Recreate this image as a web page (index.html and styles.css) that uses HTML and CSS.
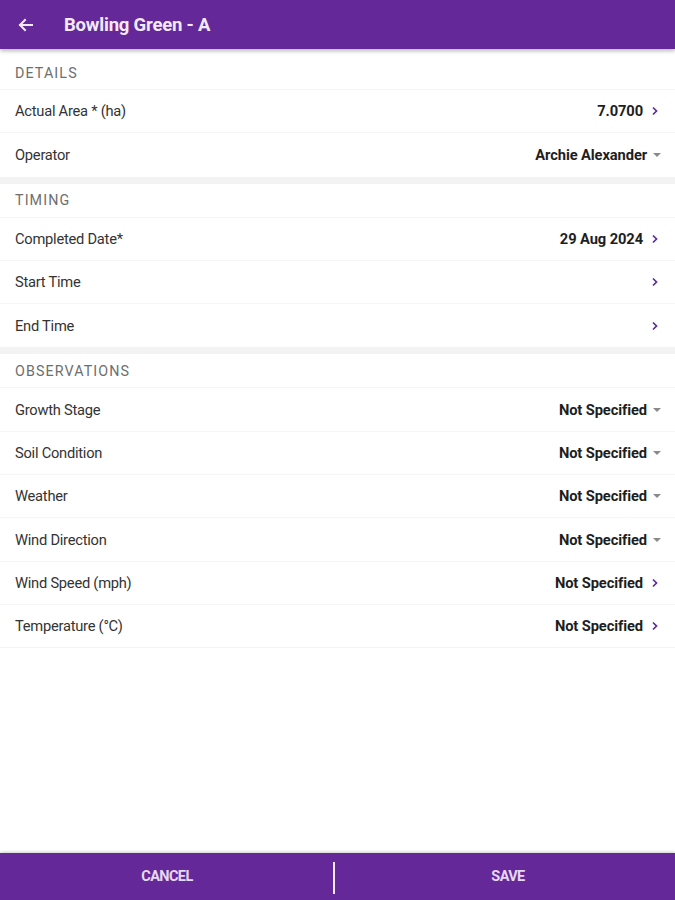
FILE: index.html
```html
<!DOCTYPE html>
<html lang="en">
<head>
<meta charset="utf-8">
<title>Bowling Green - A</title>
<link rel="stylesheet" href="styles.css">
</head>
<body>
<div class="app">
  <header class="toolbar">
    <span class="back" aria-label="Back">
      <svg width="16" height="16" viewBox="0 0 16 16"><path d="M15 8H3M8 3L3 8l5 5" fill="none" stroke="currentColor" stroke-width="2" stroke-linecap="square"/></svg>
    </span>
    <h1 class="title">Bowling Green - A</h1>
  </header>

  <main class="content">
    <section class="section first">
      <div class="sec-head">DETAILS</div>
      <div class="row"><span class="label">Actual Area * (ha)</span><span class="value">7.0700</span><span class="chev"><svg width="8" height="10" viewBox="0 0 8 10"><path d="M2 1.5L5.5 5 2 8.5" fill="none" stroke="currentColor" stroke-width="1.7"/></svg></span></div>
      <div class="row"><span class="label">Operator</span><span class="value">Archie Alexander</span><span class="drop"></span></div>
    </section>

    <section class="section">
      <div class="sec-head">TIMING</div>
      <div class="row"><span class="label">Completed Date*</span><span class="value">29 Aug 2024</span><span class="chev"><svg width="8" height="10" viewBox="0 0 8 10"><path d="M2 1.5L5.5 5 2 8.5" fill="none" stroke="currentColor" stroke-width="1.7"/></svg></span></div>
      <div class="row"><span class="label">Start Time</span><span class="value"></span><span class="chev"><svg width="8" height="10" viewBox="0 0 8 10"><path d="M2 1.5L5.5 5 2 8.5" fill="none" stroke="currentColor" stroke-width="1.7"/></svg></span></div>
      <div class="row"><span class="label">End Time</span><span class="value"></span><span class="chev"><svg width="8" height="10" viewBox="0 0 8 10"><path d="M2 1.5L5.5 5 2 8.5" fill="none" stroke="currentColor" stroke-width="1.7"/></svg></span></div>
    </section>

    <section class="section">
      <div class="sec-head">OBSERVATIONS</div>
      <div class="row"><span class="label">Growth Stage</span><span class="value">Not Specified</span><span class="drop"></span></div>
      <div class="row"><span class="label">Soil Condition</span><span class="value">Not Specified</span><span class="drop"></span></div>
      <div class="row"><span class="label">Weather</span><span class="value">Not Specified</span><span class="drop"></span></div>
      <div class="row"><span class="label">Wind Direction</span><span class="value">Not Specified</span><span class="drop"></span></div>
      <div class="row"><span class="label">Wind Speed (mph)</span><span class="value">Not Specified</span><span class="chev"><svg width="8" height="10" viewBox="0 0 8 10"><path d="M2 1.5L5.5 5 2 8.5" fill="none" stroke="currentColor" stroke-width="1.7"/></svg></span></div>
      <div class="row"><span class="label">Temperature (°C)</span><span class="value">Not Specified</span><span class="chev"><svg width="8" height="10" viewBox="0 0 8 10"><path d="M2 1.5L5.5 5 2 8.5" fill="none" stroke="currentColor" stroke-width="1.7"/></svg></span></div>
    </section>
  </main>

  <footer class="footer">
    <button class="btn">CANCEL</button>
    <span class="sep"></span>
    <button class="btn save">SAVE</button>
  </footer>
</div>
</body>
</html>
```

FILE: styles.css
```css
* { box-sizing: border-box; }
html, body { margin: 0; padding: 0; height: 100%; }
body {
  font-family: Roboto, "Liberation Sans", Arial, sans-serif;
  background: #ffffff;
  color: #2b2b2b;
}
.app {
  display: flex;
  flex-direction: column;
  height: 900px;
}
.toolbar {
  height: 49px;
  background: #652899;
  color: #f3eaf9;
  display: flex;
  align-items: center;
  padding-left: 17px;
  box-shadow: 0 2px 4px rgba(0,0,0,0.28);
  position: relative;
  z-index: 2;
  flex: none;
}
.back { display: flex; width: 16px; height: 16px; color: #f3eaf9; }
.title {
  margin: 0 0 0 31px;
  font-size: 18.5px;
  font-weight: 700;
  letter-spacing: -0.2px;
}
.content {
  flex: 1;
}
.section {
  border-top: 7px solid #f3f3f3;
}
.section.first { border-top-color: #ffffff; }
.sec-head {
  height: 34px;
  display: flex;
  align-items: center;
  padding-left: 15px;
  font-size: 14.3px;
  letter-spacing: 1.1px;
  color: #6e6e6e;
  border-bottom: 1px solid #f6f6f6;
}
.row {
  height: 43.3px;
  display: flex;
  align-items: center;
  padding-left: 15px;
  padding-right: 12px;
  border-bottom: 1px solid #f6f6f6;
}
.row:last-child { border-bottom: none; }
.section:last-child .row:last-child { border-bottom: 1px solid #f3f3f3; }
.label {
  flex: 1;
  font-size: 14.7px;
  color: #333333;
  letter-spacing: -0.25px;
}
.value {
  font-size: 14.7px;
  font-weight: 700;
  color: #1e1e1e;
  letter-spacing: -0.1px;
}
.chev {
  width: 20px;
  display: flex;
  justify-content: flex-end;
  color: #5c2a93;
  padding-right: 4px;
}
.drop {
  margin-left: 6px;
  height: 0;
  width: 0;
  border-left: 4px solid transparent;
  border-right: 4px solid transparent;
  border-top: 4px solid #8a8a8a;
  flex: none;
  margin-right: 2px;
}
.footer {
  height: 47px;
  flex: none;
  background: #652899;
  display: flex;
  align-items: center;
  box-shadow: 0 -1px 3px rgba(0,0,0,0.2);
}
.btn {
  flex: 1;
  background: none;
  border: none;
  color: #e6d9f2;
  font-family: Roboto, "Liberation Sans", Arial, sans-serif;
  font-weight: 700;
  font-size: 14.5px;
  letter-spacing: -0.6px;
  height: 100%;
  padding: 0;
}
.btn.save { padding-left: 6px; }
.sep {
  width: 2px;
  height: 32px;
  margin-left: -1px;
  margin-top: 2px;
  background: #f1e8f8;
  flex: none;
}
```
